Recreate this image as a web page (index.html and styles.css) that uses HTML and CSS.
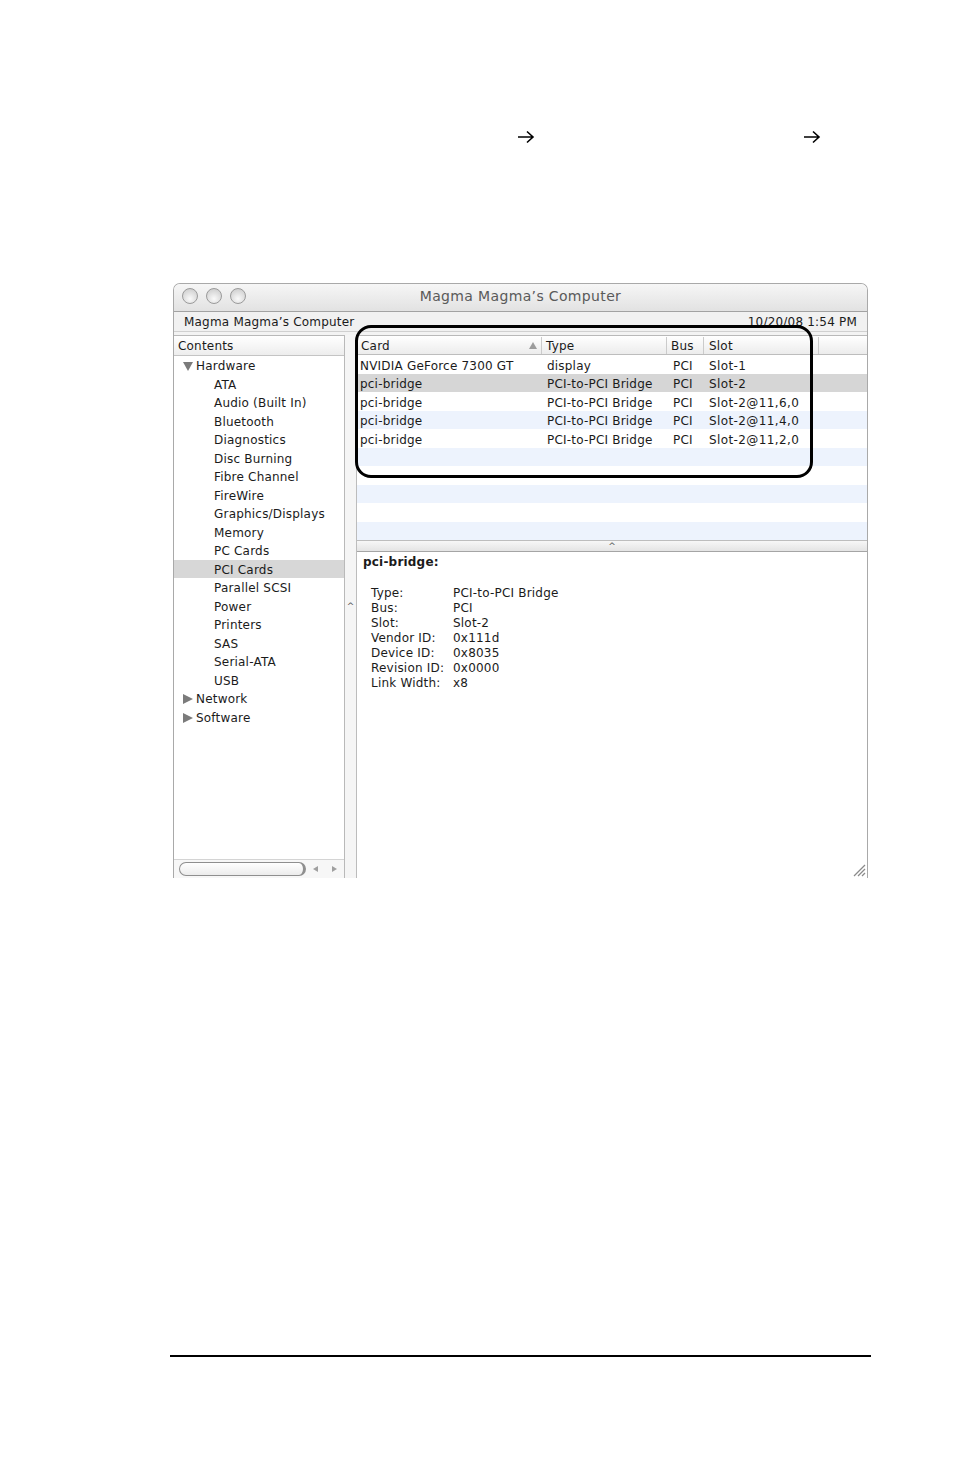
FILE: index.html
```html
<!DOCTYPE html>
<html>
<head>
<meta charset="utf-8">
<title>System Profiler</title>
<link rel="stylesheet" href="styles.css">
</head>
<body>
<div class="page">
  <div class="intro">
    <svg class="arrow a1" width="18" height="14" viewBox="0 0 18 14"><path d="M1 7H16M10 1.5L16 7L10 12.5" fill="none" stroke="#000" stroke-width="1.6"/></svg>
    <svg class="arrow a2" width="18" height="14" viewBox="0 0 18 14"><path d="M1 7H16M10 1.5L16 7L10 12.5" fill="none" stroke="#000" stroke-width="1.6"/></svg>
  </div>

  <div class="window">
    <div class="titlebar">
      <div class="lights"><span class="light"></span><span class="light"></span><span class="light"></span></div>
      <div class="title">Magma Magma’s Computer</div>
      <div></div>
    </div>
    <div class="infobar"><span>Magma Magma’s Computer</span><span>10/20/08 1:54 PM</span></div>
    <div class="main">
      <div class="sidebar">
        <div class="side-head">Contents</div>
        <ul class="tree">
          <li class="group"><span class="tri-down"></span>Hardware</li>
          <li>ATA</li>
          <li>Audio (Built In)</li>
          <li>Bluetooth</li>
          <li>Diagnostics</li>
          <li>Disc Burning</li>
          <li>Fibre Channel</li>
          <li>FireWire</li>
          <li>Graphics/Displays</li>
          <li>Memory</li>
          <li>PC Cards</li>
          <li class="sel">PCI Cards</li>
          <li>Parallel SCSI</li>
          <li>Power</li>
          <li>Printers</li>
          <li>SAS</li>
          <li>Serial-ATA</li>
          <li>USB</li>
          <li class="group"><span class="tri-right"></span>Network</li>
          <li class="group"><span class="tri-right"></span>Software</li>
        </ul>
        <div class="hscroll">
          <span class="thumb"></span>
          <span class="sarrow sl"></span>
          <span class="sarrow sr"></span>
        </div>
      </div>
      <div class="vstrip"><span class="caret">^</span></div>
      <div class="content">
        <div class="table">
          <div class="thead">
            <div class="th c-card"><span>Card</span><span class="sort"></span></div>
            <div class="th c-type">Type</div>
            <div class="th c-bus">Bus</div>
            <div class="th c-slot">Slot</div>
            <div class="th c-fill"></div>
          </div>
          <div class="tbody">
            <div class="tr"><span class="td c-card">NVIDIA GeForce 7300 GT</span><span class="td c-type">display</span><span class="td c-bus">PCI</span><span class="td c-slot">Slot-1</span></div>
            <div class="tr sel"><span class="td c-card">pci-bridge</span><span class="td c-type">PCI-to-PCI Bridge</span><span class="td c-bus">PCI</span><span class="td c-slot">Slot-2</span></div>
            <div class="tr"><span class="td c-card">pci-bridge</span><span class="td c-type">PCI-to-PCI Bridge</span><span class="td c-bus">PCI</span><span class="td c-slot">Slot-2@11,6,0</span></div>
            <div class="tr"><span class="td c-card">pci-bridge</span><span class="td c-type">PCI-to-PCI Bridge</span><span class="td c-bus">PCI</span><span class="td c-slot">Slot-2@11,4,0</span></div>
            <div class="tr"><span class="td c-card">pci-bridge</span><span class="td c-type">PCI-to-PCI Bridge</span><span class="td c-bus">PCI</span><span class="td c-slot">Slot-2@11,2,0</span></div>
            <div class="tr"></div>
            <div class="tr"></div>
            <div class="tr"></div>
            <div class="tr"></div>
            <div class="tr"></div>
          </div>
        </div>
        <div class="splitter"><span class="caret">^</span></div>
        <div class="detail">
          <div class="d-title">pci-bridge:</div>
          <dl class="props">
            <dt>Type:</dt><dd>PCI-to-PCI Bridge</dd>
            <dt>Bus:</dt><dd>PCI</dd>
            <dt>Slot:</dt><dd>Slot-2</dd>
            <dt>Vendor ID:</dt><dd>0x111d</dd>
            <dt>Device ID:</dt><dd>0x8035</dd>
            <dt>Revision ID:</dt><dd>0x0000</dd>
            <dt>Link Width:</dt><dd>x8</dd>
          </dl>
          <svg class="grip" width="13" height="13" viewBox="0 0 13 13">
            <line x1="1" y1="12" x2="12" y2="1" stroke="#8a8a8a" stroke-width="1.2"/>
            <line x1="5" y1="12" x2="12" y2="5" stroke="#8a8a8a" stroke-width="1.2"/>
            <line x1="9" y1="12" x2="12" y2="9" stroke="#8a8a8a" stroke-width="1.2"/>
          </svg>
        </div>
      </div>
    </div>
    <div class="highlight"></div>
  </div>

  <div class="rule"></div>
</div>
</body>
</html>
```

FILE: styles.css
```css
* { box-sizing: border-box; margin: 0; padding: 0; }
body { margin: 0; background: #fff; font-family: "DejaVu Sans", "Liberation Sans", sans-serif; color: #1b1b1b; }
.page { width: 954px; height: 1475px; overflow: hidden; }

.intro { height: 283px; padding-top: 130px; display: flex; align-items: flex-start; }
.arrow { display: block; }
.a1 { margin-left: 517px; }
.a2 { margin-left: 268px; }

.window { margin-left: 173px; width: 695px; height: 595px; border: 1px solid #a9a9a9; border-bottom: none; border-radius: 7px 7px 0 0; position: relative; overflow: hidden; background: #fff; letter-spacing: 0.2px; }

.titlebar { height: 28px; display: grid; grid-template-columns: 1fr auto 1fr; align-items: center; padding-bottom: 4px; background: linear-gradient(#f6f6f6, #e2e2e2); border-bottom: 1px solid #a2a2a2; }
.lights { display: flex; gap: 8px; padding-left: 8px; }
.light { width: 16px; height: 16px; border-radius: 50%; border: 1px solid #9a9a9a; background: radial-gradient(circle at 50% 70%, #fafafa, #d6d6d6 70%, #c4c4c4); }
.title { font-size: 14px; color: #5a5a5a; letter-spacing: 0.35px; }

.infobar { height: 20px; display: flex; justify-content: space-between; align-items: center; padding: 0 10px; font-size: 12px; background: #f1f1f1; border-bottom: 1px solid #d0d0d0; }

.main { height: 546px; padding-top: 3px; display: flex; background: #f3f3f3; }

.sidebar { width: 171px; display: flex; flex-direction: column; background: #fff; border-top: 1px solid #b9b9b9; border-right: 1px solid #b9b9b9; }
.side-head { height: 20px; line-height: 19px; padding-top: 1px; font-size: 12px; padding-left: 4px; background: linear-gradient(#ffffff, #ededed); border-bottom: 1px solid #c4c4c4; }
.tree { list-style: none; flex: 1; }
.tree li { height: 18.5px; line-height: 18.5px; padding-top: 1px; font-size: 12px; padding-left: 40px; white-space: nowrap; }
.tree li.group { padding-left: 9px; }
.tree li.sel { background: #d7d7d7; }
.tri-down { display: inline-block; width: 0; height: 0; border-left: 5px solid transparent; border-right: 5px solid transparent; border-top: 9px solid #7b7b7b; margin-right: 3px; vertical-align: -1px; }
.tri-right { display: inline-block; width: 0; height: 0; border-top: 5px solid transparent; border-bottom: 5px solid transparent; border-left: 10px solid #7b7b7b; margin-right: 3px; vertical-align: -1px; }

.hscroll { height: 19px; display: flex; align-items: center; padding-left: 5px; border-top: 1px solid #d4d4d4; background: #f7f7f7; }
.thumb { width: 127px; height: 14px; border-radius: 7px; border: 1.5px solid #8f8f8f; border-right-width: 3px; background: linear-gradient(#ffffff, #ececec); }
.sarrow { width: 0; height: 0; border-top: 3px solid transparent; border-bottom: 3px solid transparent; }
.sl { border-right: 5px solid #a0a0a0; margin-left: 7px; }
.sr { border-left: 5px solid #a0a0a0; margin-left: 14px; }

.vstrip { width: 12px; display: flex; align-items: center; justify-content: center; background: #f5f5f5; border-right: 1px solid #bcbcbc; }
.caret { font-size: 9px; color: #555; line-height: 9px; }

.content { flex: 1; display: flex; flex-direction: column; background: #fff; border-top: 1px solid #b9b9b9; }
.table { height: 204px; display: flex; flex-direction: column; }
.thead { height: 19px; display: flex; font-size: 12px; line-height: 18px; padding-top: 1px; background: linear-gradient(#ffffff, #ececec); border-bottom: 1px solid #bdbdbd; }
.th { border-right: 1px solid #cbcbcb; padding-left: 4px; white-space: nowrap; }
.c-card { width: 185px; flex: none; }
.c-type { width: 125px; flex: none; }
.c-bus { width: 37px; flex: none; }
.c-slot { width: 115px; flex: none; }
.c-fill { flex: 1; border-right: none; }
.th.c-card { display: flex; justify-content: space-between; align-items: center; padding-right: 4px; }
.sort { width: 0; height: 0; border-left: 4px solid transparent; border-right: 4px solid transparent; border-bottom: 7px solid #9c9c9c; }
.th.c-slot { padding-left: 5px; }

.tbody { flex: 1; }
.tr { height: 18.5px; display: flex; font-size: 12px; line-height: 18.5px; padding-top: 1.5px; white-space: nowrap; }
.tr:nth-child(even) { background: #edf3fd; }
.tr.sel { background: #d6d6d6; }
.td { overflow: visible; }
.td.c-card { padding-left: 3px; }
.td.c-type { padding-left: 5px; }
.td.c-bus { padding-left: 6px; }
.td.c-slot { padding-left: 5px; letter-spacing: 0.4px; }

.splitter { height: 12px; display: flex; justify-content: center; align-items: center; background: linear-gradient(#f7f7f7, #e4e4e4); border-top: 1px solid #bdbdbd; border-bottom: 1px solid #a5a5a5; }

.detail { flex: 1; display: flex; flex-direction: column; padding: 2px 0 0 6px; }
.d-title { font-size: 12px; font-weight: bold; line-height: 16px; }
.props { display: grid; grid-template-columns: 82px auto; margin-top: 16px; padding-left: 8px; font-size: 12px; line-height: 15px; }
.props dd { margin: 0; }
.grip { align-self: flex-end; margin-top: auto; margin-right: 1px; margin-bottom: 1px; }

.highlight { position: absolute; left: 181px; top: 41px; width: 458px; height: 153px; border: 3px solid #000; border-radius: 16px; pointer-events: none; }

.rule { margin: 477px 0 0 170px; width: 701px; height: 2px; background: #000; }
```
